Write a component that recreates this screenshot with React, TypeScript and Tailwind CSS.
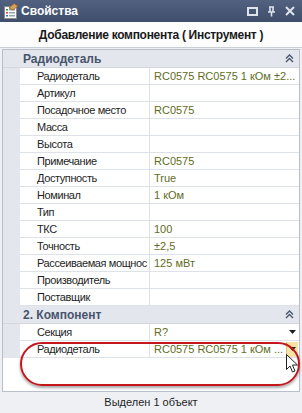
import React from 'react'

type Row = { label: string; value?: string; dropdown?: boolean; active?: boolean }

const part: Row[] = [
  { label: 'Радиодеталь', value: 'RC0575 RC0575 1 кОм ±2...' },
  { label: 'Артикул' },
  { label: 'Посадочное место', value: 'RC0575' },
  { label: 'Масса' },
  { label: 'Высота' },
  { label: 'Примечание', value: 'RC0575' },
  { label: 'Доступность', value: 'True' },
  { label: 'Номинал', value: '1 кОм' },
  { label: 'Тип' },
  { label: 'ТКС', value: '100' },
  { label: 'Точность', value: '±2,5' },
  { label: 'Рассеиваемая мощнос', value: '125 мВт' },
  { label: 'Производитель' },
  { label: 'Поставщик' },
]

const component: Row[] = [
  { label: 'Секция', value: 'R?', dropdown: true },
  { label: 'Радиодеталь', value: 'RC0575 RC0575 1 кОм ...', dropdown: true, active: true },
]

const Chevrons = () => (
  <svg width="9" height="9" viewBox="0 0 9 9" className="text-[#4a5670]">
    <path d="M1 4.5 L4.5 1 L8 4.5 M1 8 L4.5 4.5 L8 8" fill="none" stroke="currentColor" strokeWidth="1.4" />
  </svg>
)

const Category = ({ title }: { title: string }) => (
  <div className="flex items-center h-[18px] bg-[#e3e7ed] border-b border-[#d3d8e0]">
    <span className="pl-[20px] flex-1 font-bold text-[12px] text-[#48546c]">{title}</span>
    <span className="pr-[5px] flex items-center">
      <Chevrons />
    </span>
  </div>
)

const PropRow = ({ row }: { row: Row }) => (
  <div className="flex h-[17px] bg-[#e3e7ed]">
    <div className="w-[17px] shrink-0" />
    <div className="flex flex-1 bg-white border-b border-[#dde1e8]">
      <div className="w-[130px] shrink-0 pl-[17px] border-r border-[#dde1e8] text-[11px] tracking-[-0.4px] leading-[16px] text-[#1e1e1e] whitespace-nowrap overflow-hidden">
        {row.label}
      </div>
      <div className="flex flex-1 items-center min-w-0">
        <span className="flex-1 pl-[4px] text-[11px] leading-[16px] text-[#5f6d24] whitespace-nowrap overflow-hidden">
          {row.value}
        </span>
        {row.dropdown && (
          <span
            className={
              'w-[12px] h-[15px] mr-[1px] flex items-center justify-center ' +
              (row.active ? 'bg-[#f7e3a6] border-l border-[#e0c37a]' : '')
            }
          >
            <svg width="7" height="4" viewBox="0 0 7 4">
              <path d="M0 0 H7 L3.5 4 Z" fill="#1e1e1e" />
            </svg>
          </span>
        )}
      </div>
    </div>
  </div>
)

export default function App() {
  return (
    <div
      className="w-[302px] h-[413px] bg-[#eef0f3] flex flex-col overflow-hidden relative"
      style={{ fontFamily: '"Liberation Sans", Arial, sans-serif' }}
    >
      <div className="h-[22px] flex items-center bg-gradient-to-b from-[#52617f] to-[#3f4e6b] px-[3px]">
        <svg width="16" height="16" viewBox="0 0 16 16" className="mr-[2px]">
          <rect x="1.5" y="3.5" width="12" height="12" fill="#fbfbfb" stroke="#8a8a8a" />
          <rect x="3" y="6" width="2" height="1.5" fill="#3a8a3a" />
          <rect x="6" y="6" width="6" height="1.5" fill="#9aa3b5" />
          <rect x="3" y="9" width="2" height="1.5" fill="#c44" />
          <rect x="6" y="9" width="6" height="1.5" fill="#9aa3b5" />
          <rect x="3" y="12" width="2" height="1.5" fill="#3a6ac4" />
          <rect x="6" y="12" width="6" height="1.5" fill="#9aa3b5" />
          <path d="M6 5 L11 0.5 L15 3 L10 7 Z" fill="#d9a05a" stroke="#8c5a26" strokeWidth="0.8" />
        </svg>
        <span className="flex-1 text-white font-bold text-[12px]">Свойства</span>
        <div className="flex items-center gap-[9px] pr-[4px]">
          <svg width="11" height="9" viewBox="0 0 11 9">
            <rect x="1" y="1" width="9" height="7" fill="none" stroke="#dfe3ea" strokeWidth="2" />
          </svg>
          <svg width="9" height="11" viewBox="0 0 9 11">
            <path d="M2 1 H7 M3 1 V6 M6 1 V6 M1 6 H8 M4.5 6 V10.5" fill="none" stroke="#dfe3ea" strokeWidth="1.6" />
          </svg>
          <svg width="10" height="10" viewBox="0 0 10 10">
            <path d="M1 1 L9 9 M9 1 L1 9" stroke="#dfe3ea" strokeWidth="2" />
          </svg>
        </div>
      </div>

      <div className="h-[26px] bg-[#fdfdfe] border-b border-[#c9ced7] flex items-center justify-center">
        <span className="font-bold text-[12px] tracking-[-0.3px] text-[#1a1a1a]">
          Добавление компонента ( Инструмент )
        </span>
      </div>

      <div className="mx-[2px] mt-[1px] h-[343px] border border-[#b7bfcb] bg-white flex flex-col">
        <Category title="Радиодеталь" />
        {part.map((r, i) => (
          <PropRow key={i} row={r} />
        ))}
        <Category title="2. Компонент" />
        {component.map((r, i) => (
          <PropRow key={i} row={r} />
        ))}
        <div className="flex-1 bg-white" />
      </div>

      <div className="flex-1 flex items-center justify-center text-[11px] text-[#1e1e1e]">Выделен 1 объект</div>

      <div className="absolute left-[20px] top-[342px] w-[280px] h-[44px] rounded-[24px] border-2 border-[#c4161c] shadow-[0_2px_3px_rgba(0,0,0,0.35)] pointer-events-none" />

      <svg className="absolute left-[286px] top-[354px]" width="13" height="20" viewBox="0 0 13 20">
        <path d="M0.5 0.5 V15.5 L4 12 L6.5 18 L9 17 L6.5 11 H11.5 Z" fill="#fff" stroke="#222" strokeWidth="1" />
      </svg>
    </div>
  )
}
